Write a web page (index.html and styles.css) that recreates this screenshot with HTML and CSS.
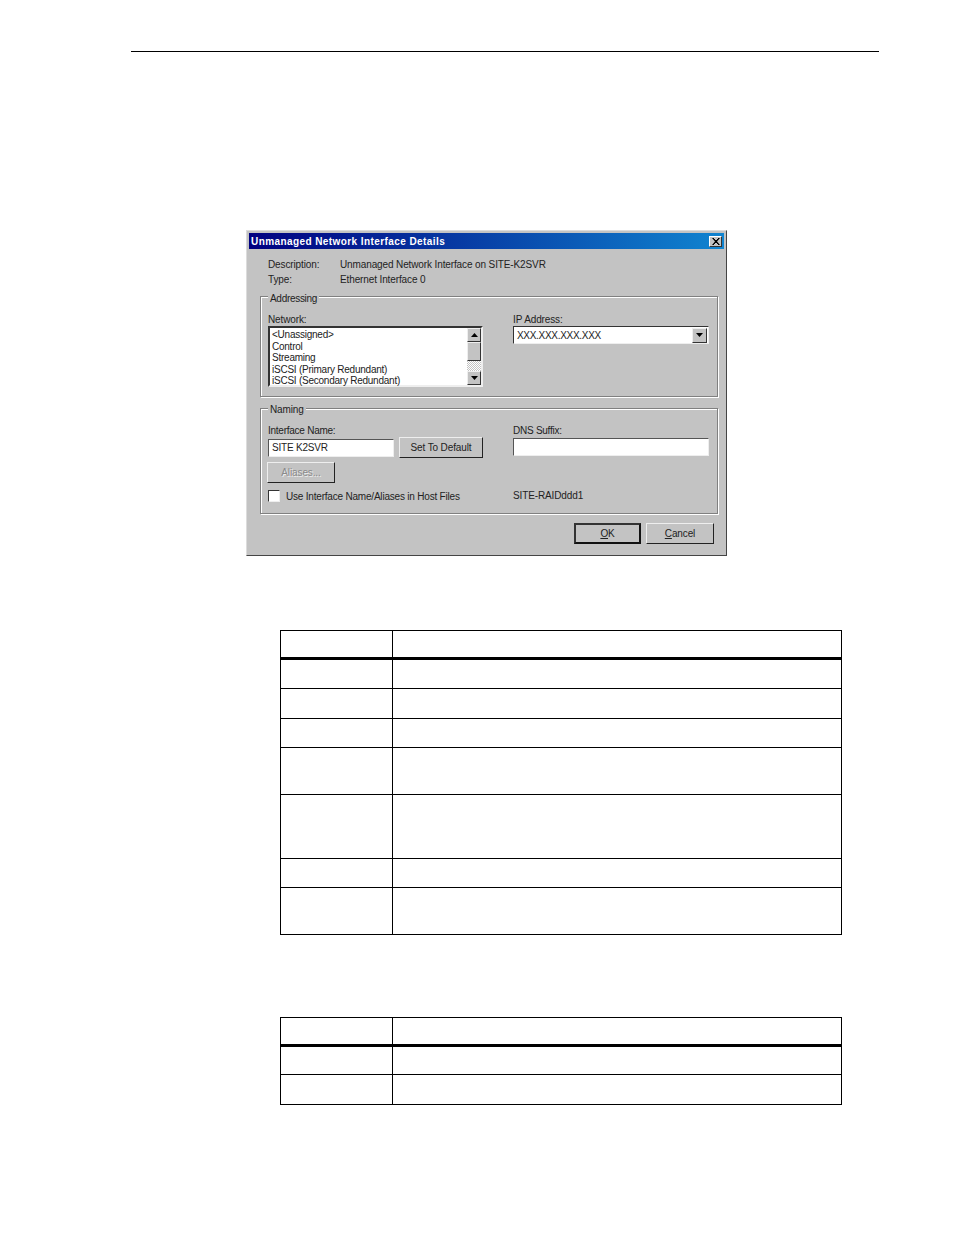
FILE: index.html
```html
<!DOCTYPE html>
<html lang="en">
<head>
    <meta charset="UTF-8">
    <title>Unmanaged Network Interface Details</title>
    <link rel="stylesheet" href="styles.css">
</head>
<body>
    <div class="page-rule"></div>

    <div class="dialog">
        <div class="title-bar">
            <span>Unmanaged Network Interface Details</span>
            <span class="close-button">
                <svg width="8" height="7" viewBox="0 0 8 7"><path d="M0 0h2v1h1v1h2V1h1V0h2L5 3.500 8 7H6V6H5V5H3v1H2v1H0l3-3.500z" fill="#000"/></svg>
            </span>
        </div>

        <div class="info-row"><span class="info-label">Description:</span><span>Unmanaged Network Interface on SITE-K2SVR</span></div>
        <div class="info-row"><span class="info-label">Type:</span><span>Ethernet Interface 0</span></div>

        <div class="group addressing">
            <span class="legend">Addressing</span>
            <div class="group-grid">
                <div>
                    <div class="field-label">Network:</div>
                    <div class="listbox">
                        <ul class="list-items">
                            <li>&lt;Unassigned&gt;</li>
                            <li>Control</li>
                            <li>Streaming</li>
                            <li>iSCSI (Primary Redundant)</li>
                            <li>iSCSI (Secondary Redundant)</li>
                        </ul>
                        <div class="scrollbar">
                            <span class="arrow-button"><svg width="7" height="4" viewBox="0 0 7 4"><path d="M3.500 0L7 4H0z"/></svg></span>
                            <span class="thumb"></span>
                            <span class="track"></span>
                            <span class="arrow-button"><svg width="7" height="4" viewBox="0 0 7 4"><path d="M0 0h7L3.500 4z"/></svg></span>
                        </div>
                    </div>
                </div>
                <div>
                    <div class="field-label">IP Address:</div>
                    <div class="combo">
                        <span class="combo-value">XXX.XXX.XXX.XXX</span>
                        <span class="arrow-button"><svg width="7" height="4" viewBox="0 0 7 4"><path d="M0 0h7L3.500 4z"/></svg></span>
                    </div>
                </div>
            </div>
        </div>

        <div class="group naming">
            <span class="legend">Naming</span>
            <div class="group-grid">
                <div>
                    <div class="field-label">Interface Name:</div>
                    <div class="name-row">
                        <div class="textbox name-box">SITE K2SVR</div>
                        <div class="button default-button">Set To Default</div>
                    </div>
                </div>
                <div>
                    <div class="field-label">DNS Suffix:</div>
                    <div class="textbox dns-box"></div>
                </div>
            </div>
            <div class="button aliases-button">Aliases...</div>
            <div class="host-row">
                <label class="check-label"><span class="checkbox"></span>Use Interface Name/Aliases in Host Files</label>
                <span class="host-name">SITE-RAIDddd1</span>
            </div>
        </div>

        <div class="dialog-buttons">
            <div class="button ok-button"><u>O</u>K</div>
            <div class="button cancel-button"><u>C</u>ancel</div>
        </div>
    </div>

    <table class="doc-table first-table">
        <tr class="head-row"><td></td><td></td></tr>
        <tr class="row-a"><td></td><td></td></tr>
        <tr class="row-tall"><td></td><td></td></tr>
        <tr class="row-a"><td></td><td></td></tr>
        <tr class="row-b"><td></td><td></td></tr>
        <tr class="row-c"><td></td><td></td></tr>
        <tr class="row-a"><td></td><td></td></tr>
        <tr class="row-b"><td></td><td></td></tr>
    </table>

    <table class="doc-table second-table">
        <tr class="head-row"><td></td><td></td></tr>
        <tr class="row-short"><td></td><td></td></tr>
        <tr class="row-tall"><td></td><td></td></tr>
    </table>
</body>
</html>
```

FILE: styles.css
```css
body {
    margin: 0;
    background-color: #fff;
    font-family: "Liberation Sans", Arial, sans-serif;
    font-size: 10px;
    color: #222;
}

.page-rule {
    height: 1px;
    margin: 51px 75px 0 131px;
    background-color: #000;
}

.dialog {
    box-sizing: border-box;
    width: 481px;
    height: 326px;
    margin: 178px 0 0 246px;
    padding: 2px;
    background-color: #c3c3c3;
    border-top: 1px solid #dcdcdc;
    border-left: 1px solid #dcdcdc;
    border-right: 1px solid #444;
    border-bottom: 1px solid #444;
    letter-spacing: -0.12px;
}

.title-bar {
    display: flex;
    justify-content: space-between;
    align-items: center;
    height: 16px;
    padding: 0 2px;
    background: linear-gradient(to right, #000080, #1084d0);
    color: #fff;
    font-weight: bold;
    letter-spacing: 0.42px;
}

.close-button {
    display: flex;
    justify-content: center;
    align-items: center;
    width: 13px;
    height: 11px;
    background-color: #c3c3c3;
    border: 1px solid;
    border-color: #fff #333 #333 #fff;
    box-sizing: border-box;
}

.info-row {
    display: flex;
    height: 15px;
    padding-left: 19px;
    line-height: 15px;
}

.title-bar + .info-row {
    margin-top: 8px;
}

.info-label {
    width: 72px;
}

.group {
    position: relative;
    box-sizing: border-box;
    width: 458px;
    margin-left: 11px;
    border: 1px solid #808080;
    box-shadow: 1px 1px 0 #fff, inset 1px 1px 0 #fff;
}

.addressing {
    height: 101px;
    margin-top: 9px;
}

.naming {
    height: 106px;
    margin-top: 11px;
}

.legend {
    position: absolute;
    top: -6px;
    left: 7px;
    padding: 0 2px;
    line-height: 13px;
    background-color: #c3c3c3;
}

.addressing .legend {
    top: -5px;
    letter-spacing: -0.3px;
}

.group-grid {
    display: grid;
    grid-template-columns: 245px 196px;
    padding: 16px 0 0 7px;
}

.naming .group-grid {
    padding-top: 15px;
}

.field-label {
    height: 13px;
    line-height: 14px;
}

.naming .field-label {
    letter-spacing: -0.25px;
}

.listbox {
    display: flex;
    box-sizing: border-box;
    width: 215px;
    height: 61px;
    background-color: #fff;
    border: 2px solid;
    border-color: #333 #eee #eee #333;
}

.list-items {
    flex: 1;
    margin: 0;
    padding: 1px 0 0 2px;
    list-style: none;
    line-height: 11.500px;
    letter-spacing: -0.24px;
}

.scrollbar {
    display: flex;
    flex-direction: column;
    width: 14px;
}

.arrow-button {
    display: flex;
    justify-content: center;
    align-items: center;
    box-sizing: border-box;
    width: 14px;
    height: 14px;
    background-color: #c3c3c3;
    border: 1px solid;
    border-color: #eee #333 #333 #eee;
}

.thumb {
    box-sizing: border-box;
    height: 19px;
    background-color: #c3c3c3;
    border: 1px solid;
    border-color: #eee #333 #333 #eee;
}

.track {
    flex: 1;
    background: repeating-conic-gradient(#fff 0 25%, #c3c3c3 0 50%) 0 0 / 2px 2px;
}

.combo {
    display: flex;
    justify-content: space-between;
    align-items: center;
    box-sizing: border-box;
    width: 196px;
    height: 18px;
    padding-right: 1px;
    background-color: #fff;
    border: 1px solid;
    border-color: #333 #eee #eee #333;
}

.combo-value {
    padding-left: 3px;
    letter-spacing: -0.3px;
}

.combo .arrow-button {
    width: 15px;
    height: 15px;
}

.name-row {
    display: flex;
    gap: 5px;
    align-items: center;
}

.textbox {
    box-sizing: border-box;
    height: 18px;
    padding-left: 3px;
    line-height: 16px;
    background-color: #fff;
    border: 1px solid;
    border-color: #555 #eee #eee #555;
}

.name-box {
    width: 126px;
    letter-spacing: -0.2px;
}

.dns-box {
    width: 196px;
    margin-top: 1px;
}

.button {
    box-sizing: border-box;
    display: flex;
    justify-content: center;
    align-items: center;
    height: 21px;
    background-color: #c3c3c3;
    border: 1px solid;
    border-color: #eee #222 #222 #eee;
}

.default-button {
    width: 84px;
}

.aliases-button {
    width: 68px;
    margin: 4px 0 0 6px;
    color: #8a8a8a;
    text-shadow: 1px 1px 0 #eee;
}

.host-row {
    display: grid;
    grid-template-columns: 245px 196px;
    align-items: center;
    margin-top: 6px;
    padding-left: 7px;
    height: 14px;
}

.check-label {
    display: flex;
    align-items: center;
    gap: 6px;
    letter-spacing: -0.2px;
}

.host-name {
    margin-top: -1px;
}

.checkbox {
    box-sizing: border-box;
    width: 12px;
    height: 12px;
    background-color: #fff;
    border: 1px solid;
    border-color: #333 #eee #eee #333;
}

.dialog-buttons {
    display: flex;
    justify-content: flex-end;
    gap: 5px;
    margin-top: 9px;
    padding-right: 10px;
}

.ok-button {
    width: 67px;
    border: 2px solid #111;
    border-top-color: #333;
    border-left-color: #333;
}

.cancel-button {
    width: 68px;
}

.doc-table {
    box-sizing: border-box;
    width: 562px;
    margin-left: 280px;
    border-collapse: collapse;
    table-layout: fixed;
}

.doc-table td {
    padding: 0;
    border: 1px solid #000;
}

.doc-table td:first-child {
    width: 111px;
}

.first-table {
    margin-top: 74px;
}

.second-table {
    margin-top: 82px;
}

.head-row td {
    height: 26px;
    border-bottom: 3px solid #000;
}

.row-a td {
    height: 28px;
}

.row-short td {
    height: 27px;
}

.row-tall td {
    height: 29px;
}

.row-b td {
    height: 46px;
}

.row-c td {
    height: 63px;
}
```
